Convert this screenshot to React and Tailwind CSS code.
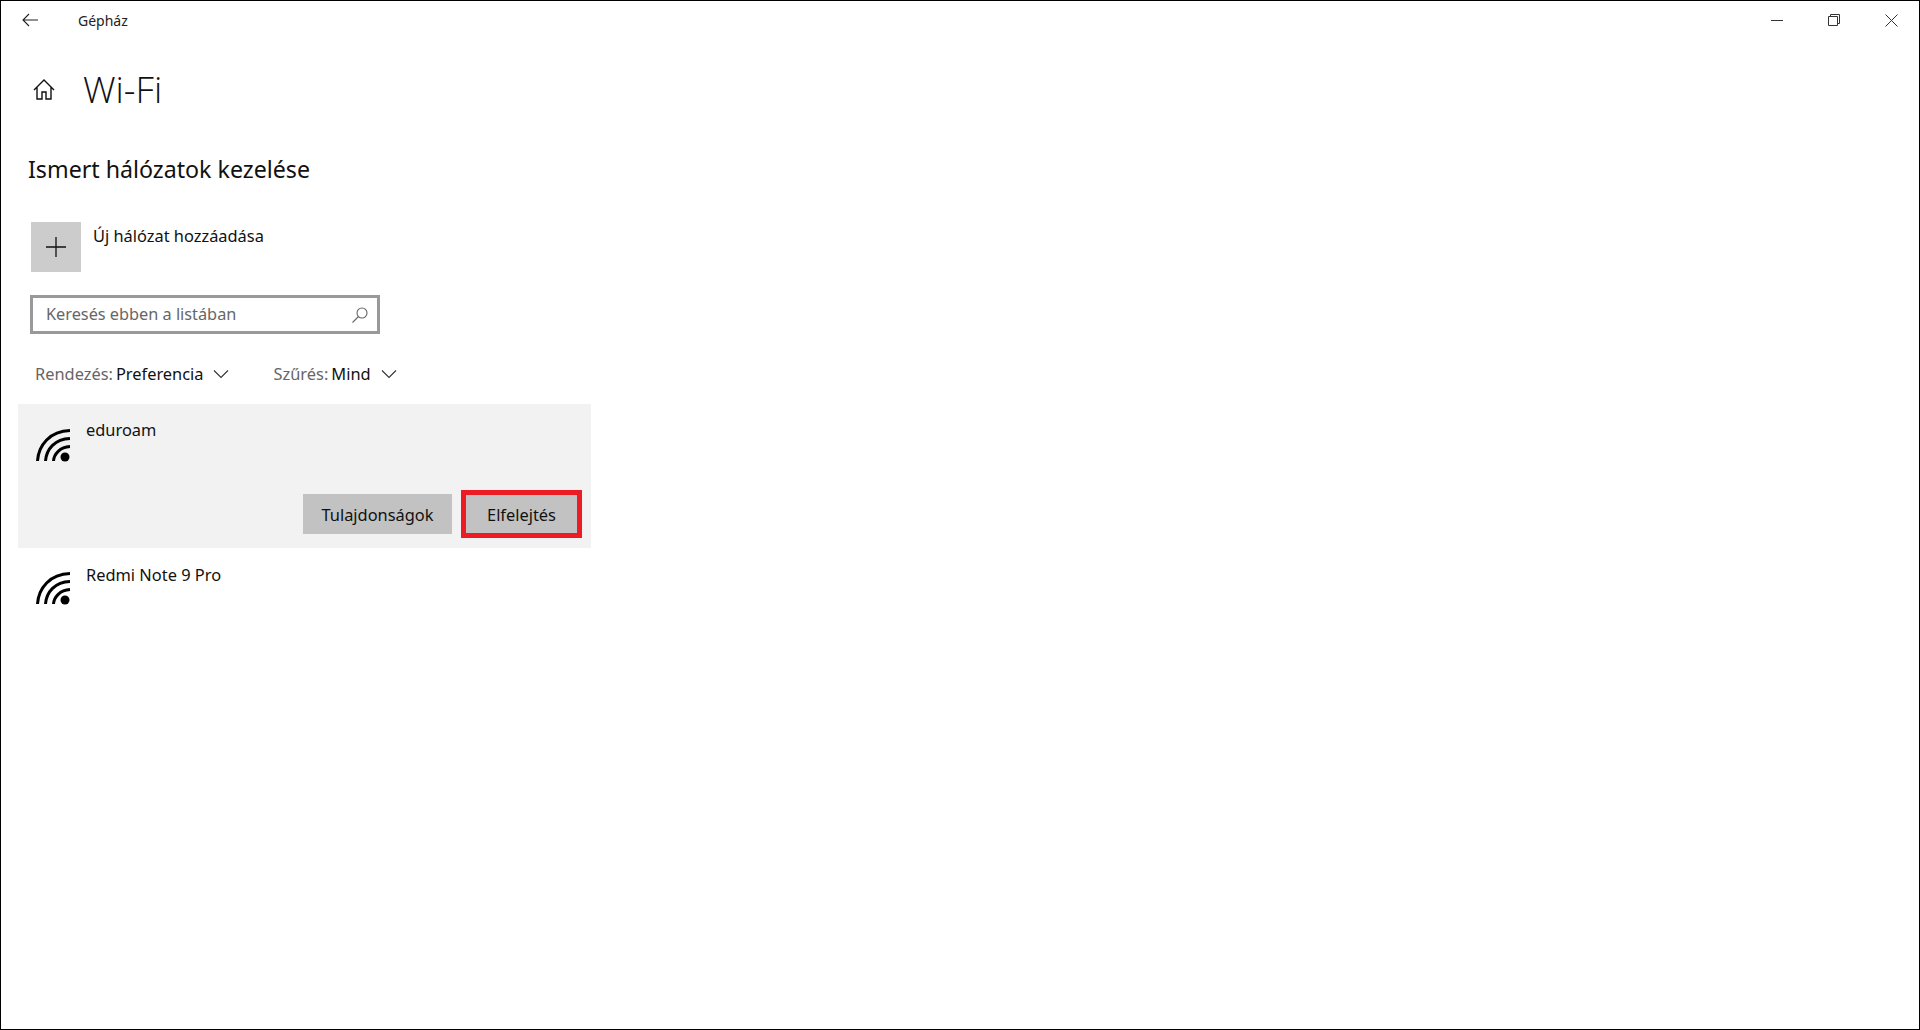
import React from "react";

const WifiIcon = () => (
  <svg width="36" height="34" viewBox="0 0 36 34" fill="none" stroke="#000" strokeWidth="3" className="shrink-0 -ml-[1px]">
    <path d="M2.5 33 C3.5 17 15 3 35 2.5" />
    <path d="M10.5 33 C11.5 21 20 11 35 10.5" />
    <path d="M18.5 33 C19 26 25 19 35 18.5" />
    <circle cx="30" cy="29" r="4.5" fill="#000" stroke="none" />
  </svg>
);

const Chevron = () => (
  <svg width="16" height="10" viewBox="0 0 16 10" fill="none" stroke="#333" strokeWidth="1.1">
    <path d="M1 1.5 L8 8.5 L15 1.5" />
  </svg>
);

const App = () => {
  return (
    <div className="w-[1920px] h-[1030px] border border-black bg-white overflow-hidden text-[#111] font-['Noto_Sans','Open_Sans',sans-serif]">
      {/* Title bar */}
      <div className="flex items-center h-[38px] pl-[21px] pr-[21px]">
        <svg width="16" height="14" viewBox="0 0 16 14" fill="none" stroke="#222" strokeWidth="1.1">
          <path d="M7 1 L1 7 L7 13 M1 7 H16" />
        </svg>
        <span className="ml-[40px] text-[14px] text-[#222]">Gépház</span>
        <div className="ml-auto flex items-center gap-[45px]">
          <div className="w-[12px] h-px bg-[#333]"></div>
          <svg width="12" height="12" viewBox="0 0 12 12" fill="none" stroke="#333" strokeWidth="1">
            <path d="M0.5 2.5 H9.5 V11.5 H0.5 Z M2.5 2.5 V0.5 H11.5 V9.5 H9.5" />
          </svg>
          <svg width="13" height="13" viewBox="0 0 13 13" fill="none" stroke="#333" strokeWidth="1">
            <path d="M0.5 0.5 L12.5 12.5 M12.5 0.5 L0.5 12.5" />
          </svg>
        </div>
      </div>

      {/* Header */}
      <div className="flex items-center h-[50px] mt-[25px] pl-[32px]">
        <svg width="22" height="21" viewBox="0 0 22 21" fill="none" stroke="#111" strokeWidth="1.4">
          <path d="M1 11 L11 1 L21 11 M4 8.5 V20 H9 V13 H13 V20 H18 V8.5" />
        </svg>
        <h1 className="ml-[28px] text-[36.5px] leading-none font-light font-['Open_Sans',sans-serif]">Wi-Fi</h1>
      </div>

      {/* Section */}
      <div className="pl-[17px] w-[590px]">
        <h2 className="ml-[10px] mt-[38px] text-[23.2px] leading-[34px]">Ismert hálózatok kezelése</h2>

        <div className="flex ml-[13px] mt-[36px]">
          <div className="w-[50px] h-[50px] bg-[#cccccc] flex items-center justify-center">
            <svg width="20" height="20" viewBox="0 0 20 20" fill="none" stroke="#111" strokeWidth="1.3">
              <path d="M10 0 V20 M0 10 H20" />
            </svg>
          </div>
          <span className="ml-[12px] mt-[2px] text-[16.4px] leading-[24px]">Új hálózat hozzáadása</span>
        </div>

        <div className="ml-[12px] mt-[23px] w-[350px] h-[39px] border-[3px] border-[#999999] flex items-center pl-[13px] pr-[9px]">
          <span className="text-[16.3px] text-[#666666]">Keresés ebben a listában</span>
          <svg className="ml-auto" width="16" height="16" viewBox="0 0 16 16" fill="none" stroke="#666" strokeWidth="1.1">
            <circle cx="10" cy="6" r="5" />
            <path d="M6.5 9.5 L0.5 15.5" />
          </svg>
        </div>

        <div className="flex items-center ml-[17px] mt-[25px] h-[30px] text-[16.4px]">
          <span className="text-[#666666]">Rendezés:</span>
          <span className="ml-[3px]">Preferencia</span>
          <span className="ml-[9px]"><Chevron /></span>
          <span className="ml-[45px] text-[#666666]">Szűrés:</span>
          <span className="ml-[3px]">Mind</span>
          <span className="ml-[10px]"><Chevron /></span>
        </div>

        {/* Network list */}
        <div className="mt-[15px]">
          <div className="bg-[#f2f2f2] h-[144px] pt-[24px]">
            <div className="flex pl-[18px]">
              <WifiIcon />
              <span className="ml-[15px] -mt-[10px] text-[16.4px] leading-[24px]">eduroam</span>
            </div>
            <div className="flex items-center justify-end gap-[9px] mt-[28px] pr-[9px]">
              <button className="h-[40px] w-[149px] pt-[3px] bg-[#c2c2c2] text-[16.4px]">Tulajdonságok</button>
              <button className="h-[48px] w-[121px] pt-[3px] bg-[#c2c2c2] border-[5px] border-[#ed1c24] text-[16.4px]">Elfelejtés</button>
            </div>
          </div>
          <div className="flex pl-[18px] pt-[23px]">
            <WifiIcon />
            <span className="ml-[15px] -mt-[8px] text-[16.4px] leading-[24px]">Redmi Note 9 Pro</span>
          </div>
        </div>
      </div>
    </div>
  );
};

export default App;
